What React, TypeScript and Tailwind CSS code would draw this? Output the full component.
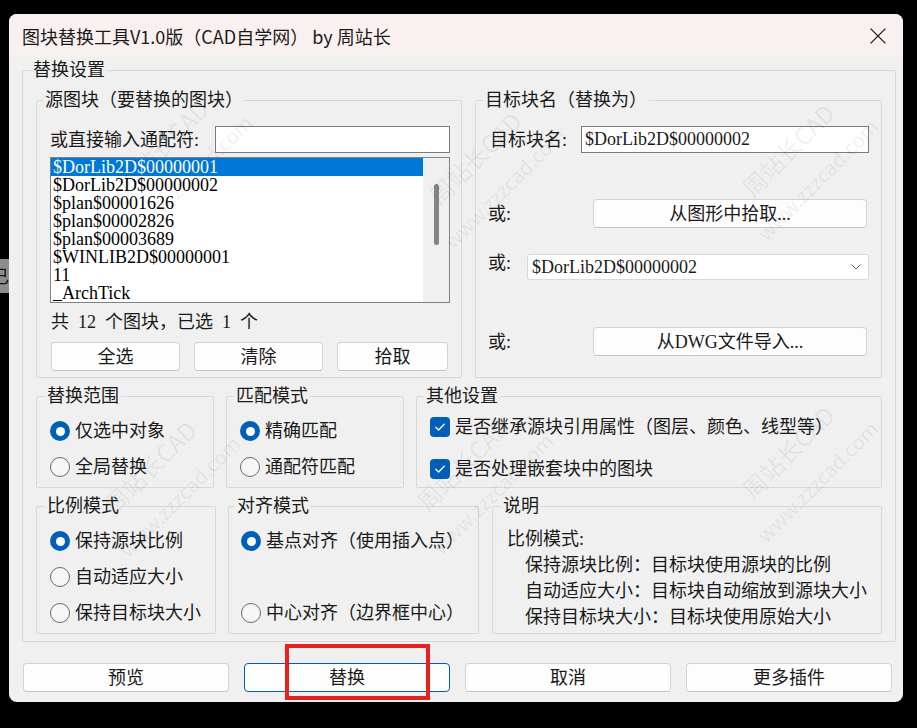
import React from "react";

const body =
  "font-['Liberation_Serif','Noto_Sans_CJK_SC',serif] text-[18px] text-[#1a1a1a]";

function Group({
  label,
  className,
  legendClass,
  children,
}: {
  label: string;
  className: string;
  legendClass?: string;
  children: React.ReactNode;
}) {
  return (
    <fieldset className={"border border-[#d8d8d8] rounded-[2px] min-w-0 " + className}>
      <legend className={"px-[2px] leading-[20px] whitespace-nowrap " + (legendClass ?? "ml-[7px]")}>
        {label}
      </legend>
      {children}
    </fieldset>
  );
}

function Btn({ className, children }: { className: string; children: React.ReactNode }) {
  return (
    <button
      type="button"
      className={
        "flex items-center justify-center bg-[#fdfdfd] border rounded-[4px] leading-[20px] " +
        className
      }
    >
      {children}
    </button>
  );
}

function Radio({ checked, label }: { checked?: boolean; label: string }) {
  return (
    <div className="flex items-center h-[24px] whitespace-nowrap">
      {checked ? (
        <span className="w-[20px] h-[20px] rounded-full bg-[#005fb8] flex items-center justify-center shrink-0">
          <span className="w-[9px] h-[9px] rounded-full bg-white" />
        </span>
      ) : (
        <span className="w-[20px] h-[20px] rounded-full border border-[#6a6a6a] bg-[#f6f6f6] shrink-0" />
      )}
      <span className="ml-[5px] leading-[20px]">{label}</span>
    </div>
  );
}

function Check({ label }: { label: string }) {
  return (
    <div className="flex items-center h-[24px] whitespace-nowrap">
      <span className="w-[20px] h-[20px] rounded-[4px] bg-[#005fb8] flex items-center justify-center shrink-0">
        <svg width="20" height="20" viewBox="0 0 20 20">
          <path d="M5.8 10.2 L8.6 13 L14.2 7.2" stroke="#ffffff" strokeWidth="1.3" fill="none" strokeLinecap="round" strokeLinejoin="round" />
        </svg>
      </span>
      <span className="ml-[5px] leading-[20px]">{label}</span>
    </div>
  );
}

const items = [
  "$DorLib2D$00000001",
  "$DorLib2D$00000002",
  "$plan$00001626",
  "$plan$00002826",
  "$plan$00003689",
  "$WINLIB2D$00000001",
  "11",
  "_ArchTick",
];

function Watermark({ className }: { className: string }) {
  return (
    <div
      className={
        "absolute -translate-x-1/2 -translate-y-1/2 -rotate-45 flex flex-col items-center gap-[16px] text-black/[0.07] font-['Noto_Sans_CJK_SC',sans-serif] whitespace-nowrap pointer-events-none " +
        className
      }
    >
      <span className="text-[24px] leading-[28px]">周站长CAD</span>
      <span className="text-[20px] leading-[24px]">www.zzzcad.com</span>
    </div>
  );
}

export default function App() {
  return (
    <div className="relative w-[917px] h-[728px] bg-black overflow-hidden pt-[14px] pl-[9px]">
      {/* fragment of a window behind */}
      <div className="absolute left-0 top-[259px] w-[9px] h-[34px] bg-[#8d8d8d] overflow-hidden">
        <span className="absolute left-[-9px] top-[6px] text-[18px] leading-[20px] text-[#111] font-['Noto_Sans_CJK_SC',sans-serif]">
          已
        </span>
      </div>

      <div className="w-[894px] h-[688px] rounded-[8px] bg-[#f0f0f0] overflow-hidden flex flex-col">
        {/* title bar */}
        <div className="h-[43px] shrink-0 bg-[#f9f1ef] flex items-center justify-between pl-[13px] pr-[17px]">
          <span className="font-['Noto_Sans_CJK_SC',sans-serif] text-[18px] leading-[24px] text-[#1a1a1a] whitespace-nowrap">
            图块替换工具V1.0版（CAD自学网） by 周站长
          </span>
          <svg width="16" height="16" viewBox="0 0 16 16">
            <path d="M0.6 0.6 L15.4 15.4 M15.4 0.6 L0.6 15.4" stroke="#1a1a1a" strokeWidth="1.3" />
          </svg>
        </div>

        <div className={"flex flex-col " + body}>
          <Group label="替换设置" className="mt-[3px] ml-[13px] w-[874px]" legendClass="ml-[8px]">
            <div className="pt-[10px] pl-[13px] pr-[13px] pb-[7px] flex flex-col gap-[8px]">
              {/* row 1 */}
              <div className="flex gap-[13px]">
                <Group label="源图块（要替换的图块）" className="w-[426px]" legendClass="ml-[6px]">
                  <div className="pt-[16px] pl-[13px] pr-[11px] pb-[6px] flex flex-col">
                    <div className="flex items-center justify-between h-[27px]">
                      <span className="leading-[20px]">或直接输入通配符:</span>
                      <div className="w-[235px] h-[27px] border border-[#7a7a7a] bg-white" />
                    </div>
                    <div className="mt-[4px] w-[400px] h-[146px] border border-[#828282] bg-white flex">
                      <div className="flex-1 flex flex-col">
                        {items.map((it, i) => (
                          <div
                            key={it}
                            className={
                              i === 0
                                ? "h-[18px] leading-[18px] pl-[2px] bg-[#0078d7] text-white whitespace-nowrap"
                                : "h-[18px] leading-[18px] pl-[2px] text-black whitespace-nowrap"
                            }
                          >
                            {it}
                          </div>
                        ))}
                      </div>
                      <div className="w-[26px] bg-[#f0f0f0] flex justify-center pt-[26px]">
                        <div className="w-[5px] h-[61px] rounded-full bg-[#858585]" />
                      </div>
                    </div>
                    <div className="mt-[9px] pl-[1px] leading-[20px] whitespace-pre">
                      {"共\u200212\u2002个图块，已选\u20021\u2002个"}
                    </div>
                    <div className="mt-[10px] ml-[1px] flex gap-[14px]">
                      <Btn className="w-[129px] h-[29px] border-[#d3d3d3] border-b-[#c4c4c4]">全选</Btn>
                      <Btn className="w-[129px] h-[29px] border-[#d3d3d3] border-b-[#c4c4c4]">清除</Btn>
                      <Btn className="w-[111px] h-[29px] border-[#d3d3d3] border-b-[#c4c4c4]">拾取</Btn>
                    </div>
                  </div>
                </Group>

                <Group label="目标块名（替换为）" className="flex-1">
                  <div className="pt-[16px] pl-[14px] pr-[12px] flex flex-col">
                    <div className="flex items-center justify-between h-[27px]">
                      <span className="leading-[20px]">目标块名:</span>
                      <div className="w-[288px] h-[27px] border border-[#7a7a7a] bg-white pl-[3px] leading-[25px] whitespace-nowrap">
                        $DorLib2D$00000002
                      </div>
                    </div>
                    <div className="mt-[46px] flex items-center justify-between h-[29px]">
                      <span className="-ml-[2px] leading-[20px]">或:</span>
                      <Btn className="mr-[2px] w-[274px] h-[29px] border-[#d3d3d3] border-b-[#c4c4c4]">从图形中拾取...</Btn>
                    </div>
                    <div className="mt-[26px] flex items-start justify-between h-[26px]">
                      <span className="-ml-[2px] leading-[18px]">或:</span>
                      <div className="w-[342px] h-[26px] bg-white border border-[#d9d9d9] rounded-[3px] flex items-center justify-between pl-[4px] pr-[7px]">
                        <span className="leading-[22px] whitespace-nowrap">$DorLib2D$00000002</span>
                        <svg width="10" height="6" viewBox="0 0 10 6">
                          <path d="M0.5 0.5 L5 5 L9.5 0.5" stroke="#5a5a5a" fill="none" strokeWidth="1" />
                        </svg>
                      </div>
                    </div>
                    <div className="mt-[47px] flex items-center justify-between h-[29px]">
                      <span className="-ml-[2px] leading-[20px]">或:</span>
                      <Btn className="mr-[2px] w-[274px] h-[29px] border-[#d3d3d3] border-b-[#c4c4c4]">从DWG文件导入...</Btn>
                    </div>
                  </div>
                </Group>
              </div>

              {/* row 2 */}
              <div className="flex gap-[12px]">
                <Group label="替换范围" className="w-[178px]" legendClass="ml-[8px]">
                  <div className="pt-[13px] pl-[13px] pb-[8px] flex flex-col gap-[12px]">
                    <Radio checked label="仅选中对象" />
                    <Radio label="全局替换" />
                  </div>
                </Group>
                <Group label="匹配模式" className="w-[178px]">
                  <div className="pt-[13px] pl-[13px] pb-[8px] flex flex-col gap-[12px]">
                    <Radio checked label="精确匹配" />
                    <Radio label="通配符匹配" />
                  </div>
                </Group>
                <Group label="其他设置" className="flex-1">
                  <div className="pt-[9px] pl-[13px] pb-[6px] flex flex-col gap-[18px]">
                    <Check label="是否继承源块引用属性（图层、颜色、线型等）" />
                    <Check label="是否处理嵌套块中的图块" />
                  </div>
                </Group>
              </div>

              {/* row 3 */}
              <div className="flex">
                <Group label="比例模式" className="w-[180px]" legendClass="ml-[8px]">
                  <div className="pt-[13px] pl-[13px] pb-[8px] flex flex-col gap-[12px]">
                    <Radio checked label="保持源块比例" />
                    <Radio label="自动适应大小" />
                    <Radio label="保持目标块大小" />
                  </div>
                </Group>
                <Group label="对齐模式" className="ml-[12px] w-[251px]" legendClass="ml-[6px]">
                  <div className="pt-[13px] pl-[12px] pb-[8px] flex flex-col gap-[48px]">
                    <Radio checked label="基点对齐（使用插入点）" />
                    <Radio label="中心对齐（边界框中心）" />
                  </div>
                </Group>
                <Group label="说明" className="ml-[13px] flex-1" legendClass="ml-[8px]">
                  <div className="pt-[10px] pl-[14px] flex flex-col leading-[26px] whitespace-nowrap">
                    <span>比例模式:</span>
                    <span className="pl-[18px]">保持源块比例：目标块使用源块的比例</span>
                    <span className="pl-[18px]">自动适应大小：目标块自动缩放到源块大小</span>
                    <span className="pl-[18px]">保持目标块大小：目标块使用原始大小</span>
                  </div>
                </Group>
              </div>
            </div>
          </Group>

          {/* bottom buttons */}
          <div className="mt-[21px] ml-[14px] flex gap-[15px]">
            <Btn className="w-[206px] h-[29px] border-[#d3d3d3] border-b-[#c4c4c4]">预览</Btn>
            <Btn className="w-[206px] h-[29px] border-[#005fb8]">替换</Btn>
            <Btn className="w-[206px] h-[29px] border-[#d3d3d3] border-b-[#c4c4c4]">取消</Btn>
            <Btn className="w-[206px] h-[29px] border-[#d3d3d3] border-b-[#c4c4c4]">更多插件</Btn>
          </div>
        </div>
      </div>

      {/* watermarks */}
      <Watermark className="left-[176px] top-[160px]" />
      <Watermark className="left-[489px] top-[172px]" />
      <Watermark className="left-[802px] top-[164px]" />
      <Watermark className="left-[164px] top-[481px]" />
      <Watermark className="left-[477px] top-[478px]" />
      <Watermark className="left-[802px] top-[466px]" />

      {/* red annotation box */}
      <div className="absolute left-[285px] top-[644px] w-[145px] h-[56px] border-[4px] border-[#e8201e] pointer-events-none" />
    </div>
  );
}
